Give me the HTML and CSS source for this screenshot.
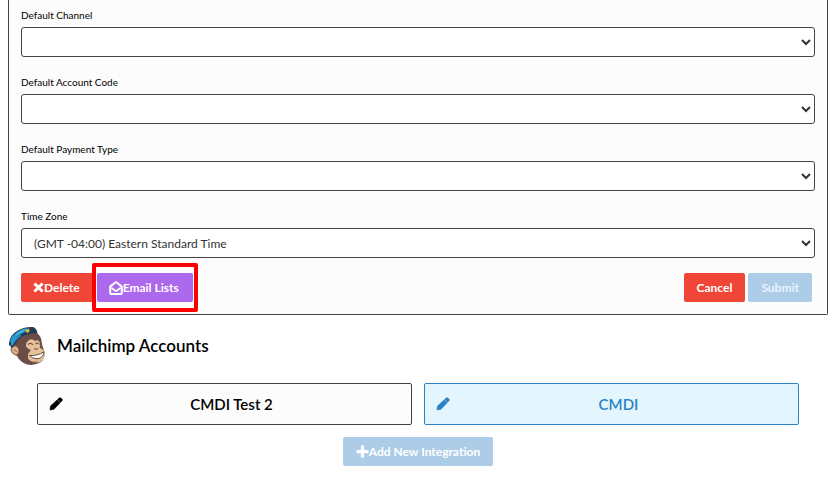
FILE: index.html
```html
<!DOCTYPE html>
<html lang="en">
<head>
<meta charset="utf-8">
<meta name="viewport" content="width=device-width, initial-scale=1">
<title>Integrations</title>
<link rel="stylesheet" href="styles.css">
</head>
<body>
<form class="panel">
  <div class="field">
    <label for="channel">Default Channel</label>
    <select id="channel"><option></option></select>
  </div>
  <div class="field">
    <label for="account">Default Account Code</label>
    <select id="account"><option></option></select>
  </div>
  <div class="field">
    <label for="payment">Default Payment Type</label>
    <select id="payment"><option></option></select>
  </div>
  <div class="field">
    <label for="zone">Time Zone</label>
    <select id="zone"><option>(GMT -04:00) Eastern Standard Time</option></select>
  </div>
  <div class="actions">
    <button type="button" class="btn with-icon red"><svg class="icon-x" viewBox="0 0 11 11" aria-hidden="true"><path d="M2.500 2.500l6 6M8.500 2.500l-6 6" stroke="currentColor" stroke-width="3" stroke-linecap="square"/></svg>Delete</button>
    <span class="highlight"><button type="button" class="btn with-icon purple"><svg class="icon-mail" viewBox="0 0 14 14" aria-hidden="true"><path d="M1.200 5.600L6 1.700q1-.8 2 0l4.800 3.900V12q0 1-1 1H2.200q-1 0-1-1z" fill="none" stroke="currentColor" stroke-width="2" stroke-linejoin="round"/><path d="M3 7.300l3 2.200q1 .7 2 0l3-2.200" fill="none" stroke="currentColor" stroke-width="1.800" stroke-linecap="round"/></svg>Email Lists</button></span>
    <span class="confirm">
      <button type="button" class="btn red">Cancel</button>
      <button type="submit" class="btn blue" disabled>Submit</button>
    </span>
  </div>
</form>

<header class="brand">
  <svg class="logo" viewBox="0 0 38 40" aria-hidden="true">
    <path d="M5 20L10 13L20 7L29 7Q33 10 33.500 15Q34 20 36 24Q38 32 33 36Q27 40 19 38.500Q12 36 9 30Q5 28 5 20z" fill="#694d46"/>
    <path d="M4 20.500Q8 18.500 10.500 22Q12 28 8 29Q3.500 28 3 24Q3 22 4 20.500z" fill="#dcb58f" stroke="#795748"/>
    <path d="M5.500 24q2.500-1 3 2" fill="none" stroke="#956c55"/>
    <path d="M19.500 15.500Q23 11.500 27 15Q31 13 32 17Q32.500 20 31.500 22Q36.500 23 37 27Q37.500 33 32 36Q26 37.500 21 34Q18 29 23 24Q17.500 22 18 18.500Q18 17 19.500 15.500z" fill="#e6c29b"/>
    <path d="M20 18.500q3-2.500 5 .5M27.500 18q2-2 4 .5" fill="none" stroke="#7d5947" stroke-width="1.100"/>
    <path d="M26 22.500q2 1.200 4 .3" fill="none" stroke="#76534a" stroke-width="1.200"/>
    <path d="M21.500 29.500Q30 30 35.800 25.800Q36 31 30 32.800Q24 33 21.500 29.500z" fill="#fff" stroke="#674a44"/>
    <path d="M25 35.200q3 .8 5-.2" fill="none" stroke="#bd8d6e"/>
    <path d="M1 17Q2 9 9 5Q16 .5 25 1Q28.500 2 29.500 7Q18 7 11 13L4.500 22L1 19z" fill="#233d58"/>
    <path d="M2 15Q4 9 10 5.500Q15 2 20 2L18 5.500Q11 8 7 13L3.500 17.500z" fill="#269bd1"/>
    <path d="M8 8Q12 4 17 3L15.500 5.500Q11 7 8 10z" fill="#48b6df"/>
    <path d="M2.500 18.200L4.200 20Q8 13 13 10L13 8.500Q6 12 2.500 18.200z" fill="#299bcd"/>
    <path d="M17 3l2 1 2-1.500.5 3-2.500 1.500z" fill="#edc63e"/>
  </svg>
  <h1>Mailchimp Accounts</h1>
</header>

<main class="accounts">
  <button type="button" class="account"><svg class="pencil" viewBox="0 0 14 14" aria-hidden="true"><path d="M1 13L1.500 9L8 3L11 6L5 12.200zM8.500 2.600L10.200 1q1-.8 2 .2l.8.8q.8 1 0 1.800L11.400 5.500z" fill="currentColor" stroke="currentColor" stroke-width=".6" stroke-linejoin="round"/></svg><span>CMDI Test 2</span></button>
  <button type="button" class="account selected"><svg class="pencil" viewBox="0 0 14 14" aria-hidden="true"><path d="M1 13L1.500 9L8 3L11 6L5 12.200zM8.500 2.600L10.200 1q1-.8 2 .2l.8.8q.8 1 0 1.800L11.400 5.500z" fill="currentColor" stroke="currentColor" stroke-width=".6" stroke-linejoin="round"/></svg><span>CMDI</span></button>
</main>
<footer class="add">
  <button type="button" class="btn blue" disabled><svg class="icon-plus" viewBox="0 0 12 12" aria-hidden="true"><path d="M6 2v8M2 6h8" stroke="currentColor" stroke-width="3" stroke-linecap="square"/></svg>Add New Integration</button>
</footer>
</body>
</html>
```
FILE: styles.css
```css
* { box-sizing: border-box; }

body {
  margin: 0;
  padding: 0 10px 16px 8px;
  background: #fff;
  color: #000;
  font-family: Lato, "Liberation Sans", sans-serif;
}

.panel {
  display: flex;
  flex-direction: column;
  gap: 19px;
  padding: 9px 12px 12px;
  border: 1px solid #444;
  border-top: 0;
  border-radius: 0 0 2px 2px;
  background: #fcfcfc;
}

.field {
  display: flex;
  flex-direction: column;
  gap: 6px;
}

.field label {
  font-size: 10px;
  line-height: 12px;
}

.field select {
  width: 100%;
  height: 30px;
  padding: 0 8px;
  border: 1px solid #444;
  border-radius: 3px;
  background: #fff;
  color: #333;
  font: 12px Lato, "Liberation Sans", sans-serif;
}

.actions {
  display: flex;
  align-items: center;
  height: 29px;
  margin-top: -4px;
}

.btn {
  display: inline-flex;
  align-items: center;
  justify-content: center;
  height: 29px;
  padding: 0 13px;
  border: 0;
  border-radius: 2px;
  color: #fff;
  font: bold 12px Lato, "Liberation Sans", sans-serif;
  white-space: nowrap;
}

.btn.with-icon { padding: 0 14px 0 12px; }

.red { background: #f04638; }
.purple { background: #ad69ee; }
.blue { background: #adcce8; }
.confirm .blue { color: #e9f3fc; }

.highlight {
  margin-left: -2px;
  padding: 6px 1px;
  border: 4px solid #f00;
  border-radius: 2px;
}

.highlight .btn { vertical-align: top; }

.confirm {
  display: flex;
  gap: 3px;
  margin-left: auto;
  margin-right: 3px;
}

.icon-x { width: 11px; height: 11px; }
.icon-mail { width: 14px; height: 14px; }
.icon-plus { width: 13px; height: 13px; }

.brand {
  display: flex;
  align-items: center;
  gap: 11px;
  padding-top: 11px;
}

.logo { width: 38px; height: 40px; }

h1 {
  margin: 0;
  font-size: 17px;
  font-weight: 600;
  line-height: 24px;
}

.accounts {
  display: grid;
  grid-template-columns: 1fr 1fr;
  gap: 12px;
  padding: 17px 29px 12px;
}

.account {
  display: grid;
  grid-template-columns: 14px 1fr;
  align-items: center;
  height: 42px;
  padding: 0 11px;
  border: 1px solid #444;
  border-radius: 2px;
  background: #fcfcfc;
  color: #000;
  font: 600 15px Lato, "Liberation Sans", sans-serif;
}

.account.selected {
  border-color: #2b82c4;
  background: #e3f6fe;
  color: #2b82c4;
}

.pencil { width: 14px; height: 14px; }

.add {
  display: flex;
  justify-content: center;
}
```
